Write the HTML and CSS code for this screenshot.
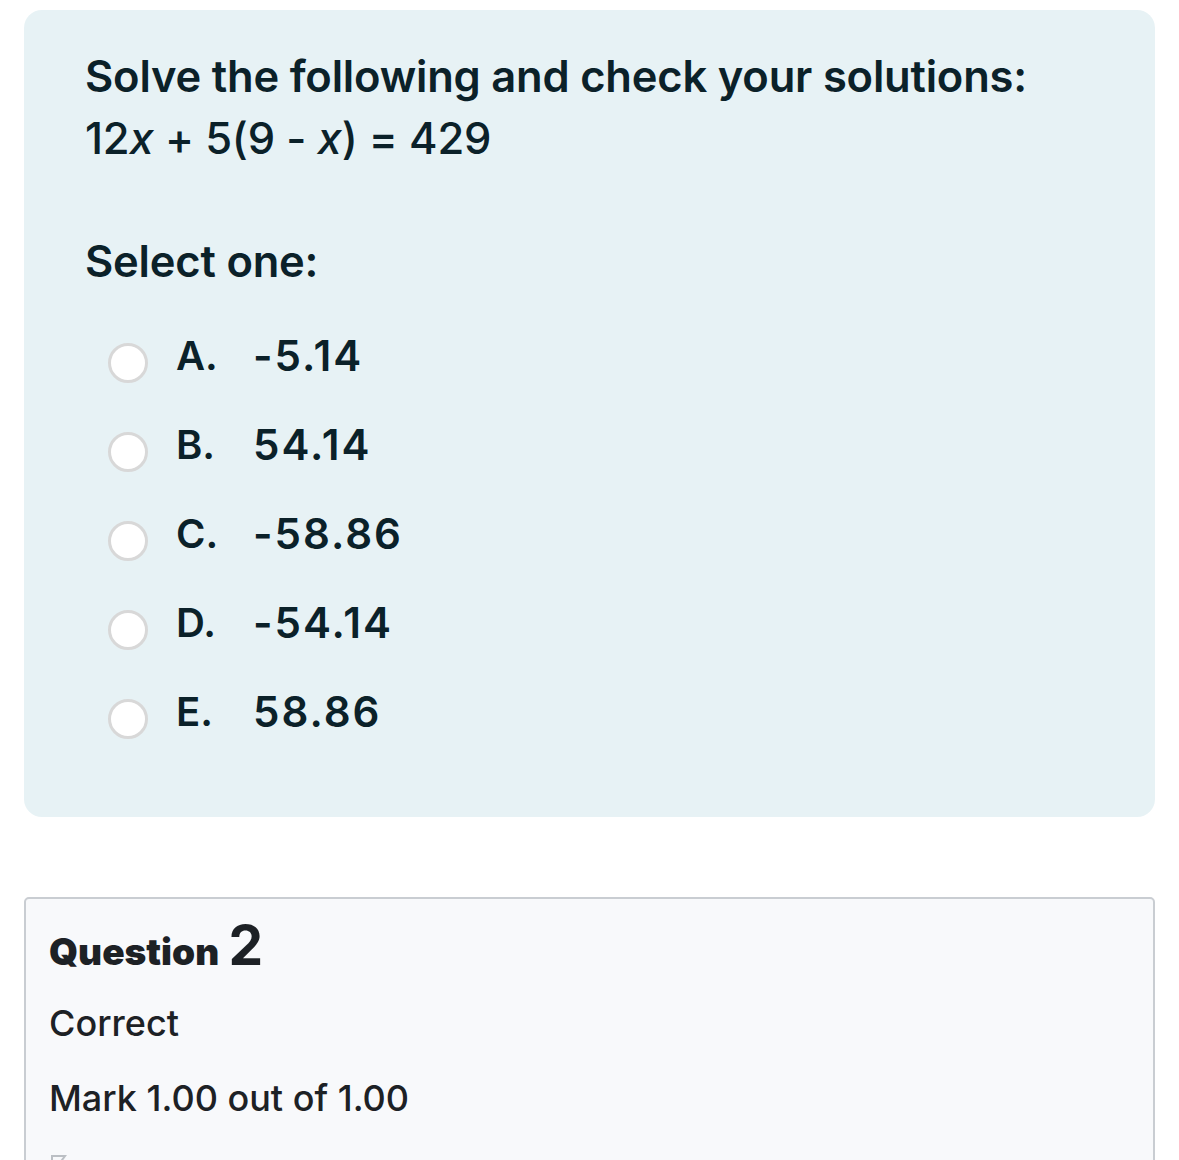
FILE: index.html
```html
<!DOCTYPE html>
<html lang="en">
<head>
<meta charset="utf-8">
<title>Quiz</title>
<link rel="stylesheet" href="styles.css">
</head>
<body>
<div class="page">
  <section class="qtext-box">
    <div class="qtext">
      <p class="line">Solve the following and check your solutions:</p>
      <p class="line eq">12<i>x</i> + 5(9 - <i>x</i>) = 429</p>
    </div>
    <p class="prompt">Select one:</p>
    <div class="answers">
      <label class="opt"><span class="radio"></span><span class="letter">A.</span><span class="val">-5.14</span></label>
      <label class="opt"><span class="radio"></span><span class="letter">B.</span><span class="val">54.14</span></label>
      <label class="opt"><span class="radio"></span><span class="letter">C.</span><span class="val">-58.86</span></label>
      <label class="opt"><span class="radio"></span><span class="letter">D.</span><span class="val">-54.14</span></label>
      <label class="opt"><span class="radio"></span><span class="letter">E.</span><span class="val">58.86</span></label>
    </div>
  </section>

  <section class="info-box">
    <h3 class="qno">Question <span class="num">2</span></h3>
    <div class="state">Correct</div>
    <div class="grade">Mark 1.00 out of 1.00</div>
    <div class="flag">
      <svg width="22" height="22" viewBox="0 0 22 22"><path d="M3 2v18M3 3h13l-3 4 3 4H3" fill="none" stroke="#bbbfc4" stroke-width="2"/></svg>
    </div>
  </section>
</div>
</body>
</html>
```

FILE: styles.css
```css
* { box-sizing: border-box; }
html, body { margin: 0; padding: 0; background: #ffffff; }
body {
  font-family: Inter, "Noto Sans", "Liberation Sans", sans-serif;
  color: #0b2129;
}
.page {
  padding: 10px 24px 0 24px;
  height: 1160px;
  overflow: hidden;
}
.qtext-box {
  background: #e7f2f5;
  border-radius: 18px;
  padding: 35px 61px 61px 61px;
}
.line {
  margin: 0;
  font-size: 43.5px;
  line-height: 62px;
  font-weight: 600;
  letter-spacing: -0.2px;
}
.line.eq { font-weight: 500; }
.line.eq i { font-style: italic; }
.prompt {
  margin: 61px 0 0 0;
  font-size: 43.5px;
  line-height: 62px;
  font-weight: 600;
  letter-spacing: -0.2px;
}
.answers {
  margin-top: 19px;
  display: flex;
  flex-direction: column;
}
.opt {
  height: 89px;
  display: flex;
  align-items: center;
  font-size: 40px;
  line-height: 1;
  font-weight: 600;
}
.radio {
  width: 40px;
  height: 40px;
  border-radius: 50%;
  border: 3px solid #d8d8d8;
  background: #ffffff;
  margin-left: 23px;
  margin-right: 28px;
  margin-top: 14px;
  flex: none;
}
.letter { width: 77px; }
.val { font-size: 42px; letter-spacing: 2px; }
.info-box {
  margin-top: 80px;
  background: #f8f9fb;
  border: 2px solid #c9cdd2;
  border-radius: 5px;
  padding: 16px 23px 0 23px;
  color: #1d2125;
  height: 400px;
}
.qno {
  margin: 0;
  font-size: 37px;
  font-weight: 900;
  line-height: 60px;
}
.qno .num {
  font-size: 55px;
  font-weight: 700;
  margin-left: 2px;
}
.state {
  margin-top: 16px;
  font-size: 36px;
  font-weight: 500;
  line-height: 50px;
}
.grade {
  margin-top: 25px;
  font-size: 36px;
  font-weight: 500;
  line-height: 50px;
}
.flag { margin-top: 30px; }
```
